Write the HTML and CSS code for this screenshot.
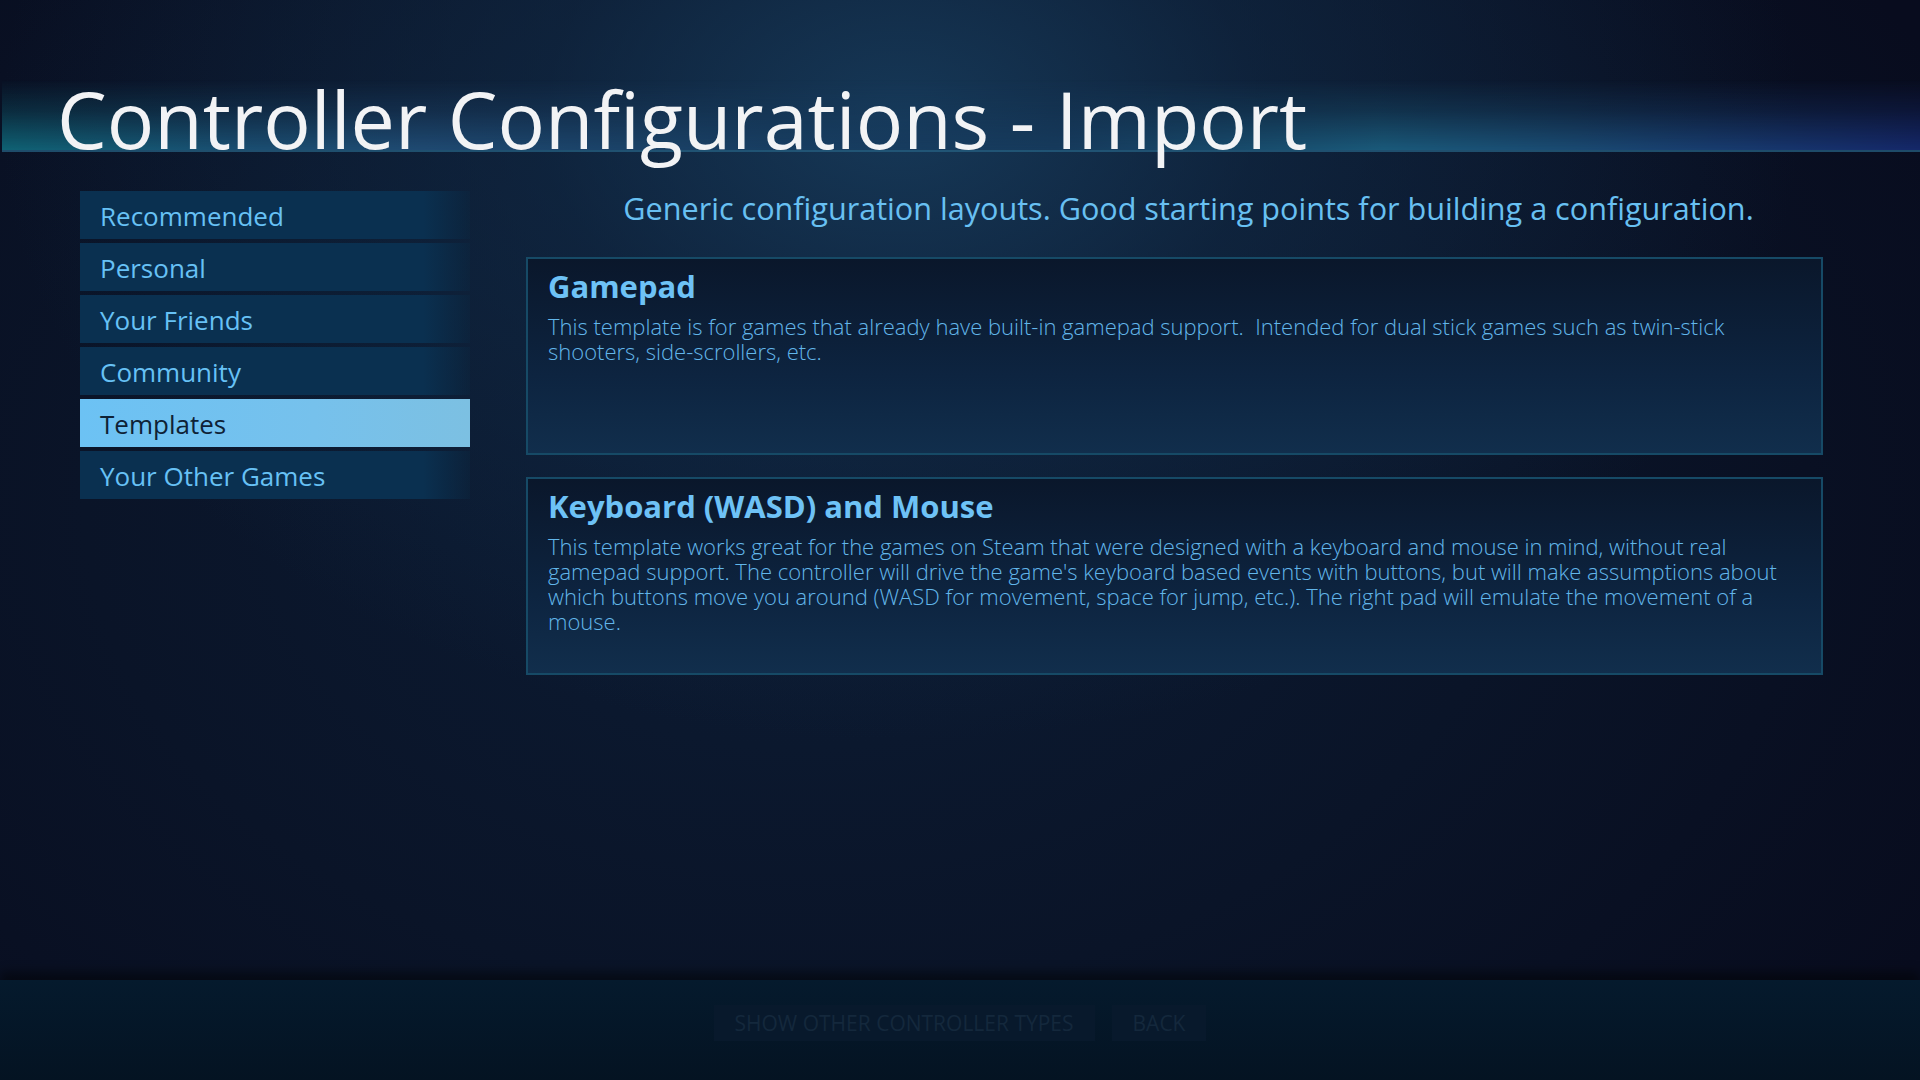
FILE: index.html
```html
<!DOCTYPE html>
<html lang="en">
<head>
<meta charset="utf-8">
<title>Controller Configurations - Import</title>
<link rel="stylesheet" href="styles.css">
</head>
<body>
<div class="screen">
  <header class="header">
    <div class="band">
      <h1 class="title">Controller Configurations - Import</h1>
    </div>
  </header>
  <div class="body">
    <nav class="sidebar">
      <div class="nav-item">Recommended</div>
      <div class="nav-item">Personal</div>
      <div class="nav-item">Your Friends</div>
      <div class="nav-item">Community</div>
      <div class="nav-item nav-item-active">Templates</div>
      <div class="nav-item">Your Other Games</div>
    </nav>
    <main class="content">
      <p class="subtitle">Generic configuration layouts. Good starting points for building a configuration.</p>
      <section class="card">
        <h2 class="card-title">Gamepad</h2>
        <p class="card-desc">This template is for games that already have built-in gamepad support.&nbsp; Intended for dual stick games such as twin-stick shooters, side-scrollers, etc.</p>
      </section>
      <section class="card">
        <h2 class="card-title">Keyboard (WASD) and Mouse</h2>
        <p class="card-desc">This template works great for the games on Steam that were designed with a keyboard and mouse in mind, without real gamepad support. The controller will drive the game's keyboard based events with buttons, but will make assumptions about which buttons move you around (WASD for movement, space for jump, etc.). The right pad will emulate the movement of a mouse.</p>
      </section>
    </main>
  </div>
  <footer class="footer">
    <div class="btn">SHOW OTHER CONTROLLER TYPES</div>
    <div class="btn">BACK</div>
  </footer>
</div>
</body>
</html>
```

FILE: styles.css
```css
* { box-sizing: border-box; }
html, body {
  margin: 0;
  padding: 0;
  width: 1920px;
  height: 1080px;
  overflow: hidden;
  background: #080d1e;
  font-family: "Open Sans", "Noto Sans", sans-serif;
  font-variant-ligatures: none;
}
.screen {
  width: 1920px;
  height: 1080px;
  display: flex;
  flex-direction: column;
  background:
    radial-gradient(ellipse 900px 620px at 900px 120px, rgba(24, 62, 95, 0.85) 0%, rgba(18, 46, 75, 0.55) 40%, rgba(12, 26, 48, 0) 100%),
    radial-gradient(ellipse 1300px 900px at 800px 500px, #0c1c34 0%, #0a1428 55%, #080c1e 100%);
}
.header {
  height: 152px;
  padding-top: 80px;
  flex: none;
}
.band {
  position: relative;
  height: 72px;
  margin-left: 2px;
  border-bottom: 2px solid rgba(38, 96, 130, 0.75);
}
.band::before {
  content: "";
  position: absolute;
  inset: 0;
  background: linear-gradient(to right, #0f6274 0%, #1a4f72 12%, #1f4a72 22%, #183e62 40%, #163a5c 55%, #1a5a7a 72%, #1a4a72 82%, #15286a 100%);
  -webkit-mask-image: linear-gradient(to bottom, rgba(0,0,0,0) 0%, rgba(0,0,0,0.35) 45%, rgba(0,0,0,1) 100%);
  mask-image: linear-gradient(to bottom, rgba(0,0,0,0) 0%, rgba(0,0,0,0.35) 45%, rgba(0,0,0,1) 100%);
}
.title {
  position: relative;
  margin: 0;
  padding-left: 55px;
  font-weight: 400;
  font-size: 79px;
  line-height: 78px;
  color: #f2f3f5;
  white-space: nowrap;
}
.body {
  flex: 1;
  display: flex;
  padding-top: 39px;
}
.sidebar {
  width: 390px;
  margin-left: 80px;
  display: flex;
  flex-direction: column;
  gap: 4px;
}
.nav-item {
  height: 48px;
  padding-left: 20px;
  padding-top: 2px;
  display: flex;
  align-items: center;
  font-size: 26px;
  color: #67c1f5;
  background: linear-gradient(to right, #0a3050 0%, #0a3050 88%, rgba(10, 40, 66, 0.35) 100%);
}
.nav-item-active {
  color: #0e2236;
  background: linear-gradient(to right, #6cc2f4 0%, #76c1ec 60%, #7cc0e2 100%);
}
.content {
  width: 1297px;
  margin-left: 56px;
  display: flex;
  flex-direction: column;
}
.subtitle {
  margin: 0;
  padding-left: 28px;
  height: 66px;
  text-align: center;
  font-size: 30.6px;
  line-height: 34px;
  color: #68c0f2;
}
.card {
  height: 198px;
  margin-bottom: 22px;
  padding: 7px 31px 0 20px;
  border: 2px solid #164a66;
  background: linear-gradient(to bottom, #0a172b 0%, #0d2440 60%, #112e4c 100%);
}
.card-title {
  margin: 0;
  font-size: 31px;
  font-weight: 700;
  line-height: 40px;
  color: #6ec2f6;
}
.card-desc {
  margin: 8px 0 0 0;
  font-size: 22px;
  font-weight: 300;
  line-height: 25px;
  color: #62b6ea;
}
.footer {
  height: 100px;
  flex: none;
  display: flex;
  justify-content: center;
  align-items: flex-start;
  gap: 17px;
  padding-top: 25px;
  background: linear-gradient(to bottom, #051a2d 0%, #041322 100%);
  box-shadow: 0 -8px 10px rgba(0, 0, 0, 0.45);
}
.btn {
  height: 36px;
  padding: 0 21px;
  display: flex;
  align-items: center;
  font-size: 21px;
  color: #14283c;
  background: #08192c;
}
```
